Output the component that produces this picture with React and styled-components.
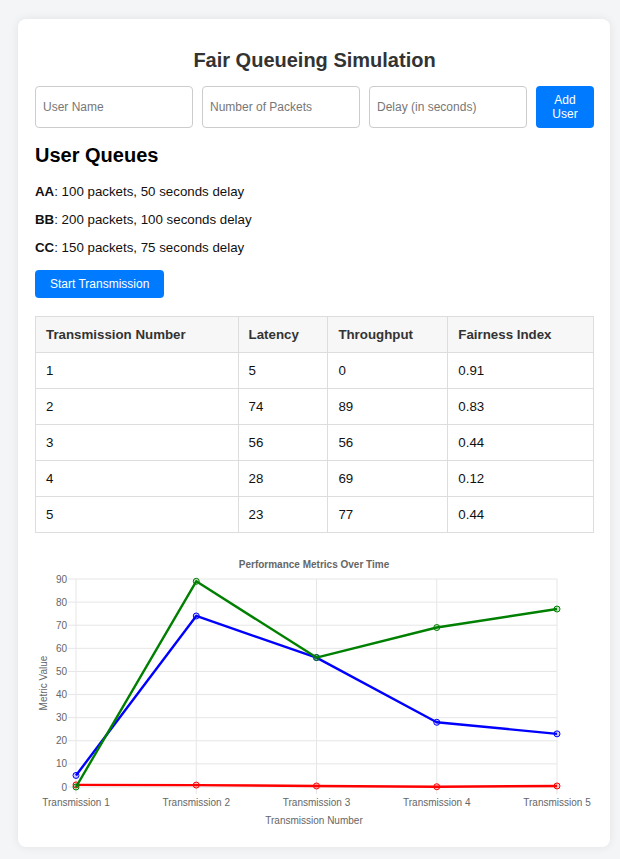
import React from 'react'
import styled, { createGlobalStyle } from 'styled-components';

const GlobalStyle = createGlobalStyle`
    body {
        margin: 0;
        background: #f4f5f7;
        font-family: "Liberation Sans", Arial, Helvetica, sans-serif;
    }
`;

const Page = styled.div`
    padding: 19px 10px 13px 18px;
`;

const Card = styled.div`
    background: #fff;
    border-radius: 8px;
    box-shadow: 0 0 10px rgba(0,0,0,0.08);
    padding: 17px 16px 14px 17px;
`;

const Title = styled.h1`
    margin: 12px 0 14px;
    font-size: 20px;
    line-height: 24px;
    text-align: center;
    color: #333;
`;

const Form = styled.div`
    display: flex;
    gap: 9px;
`;

const Input = styled.input`
    flex: 1;
    min-width: 0;
    height: 42px;
    box-sizing: border-box;
    padding: 0 7px;
    border: 1px solid #ccc;
    border-radius: 4px;
    font-family: inherit;
    font-size: 12px;
    &::placeholder { color: #777; }
`;

const Button = styled.button`
    background: #007bff;
    color: #fff;
    border: none;
    border-radius: 4px;
    font-family: inherit;
    font-size: 12px;
    line-height: 14px;
    padding: ${p => p.$padding || '7px 15px'};
    width: ${p => p.$width || 'auto'};
    margin: ${p => p.$margin || '0'};
`;

const Heading = styled.h2`
    margin: 15px 0 17px;
    font-size: 20px;
    line-height: 24px;
    color: #000;
`;

const QueueItem = styled.p`
    margin: 0 0 12px;
    font-size: 13.3px;
    line-height: 16px;
    color: #111;
`;

const Table = styled.table`
    width: 100%;
    margin-top: 18px;
    border-collapse: collapse;
    font-size: 13.3px;
`;

const Th = styled.th`
    width: ${p => p.$w};
    height: 36px;
    box-sizing: border-box;
    padding: 0 10px;
    border: 1px solid #ddd;
    background: #f7f7f7;
    color: #333;
    text-align: left;
`;

const Td = styled.td`
    height: 36px;
    box-sizing: border-box;
    padding: 0 10px;
    border: 1px solid #ddd;
    color: #111;
`;

const ChartWrap = styled.div`
    margin-top: 20px;
    svg { display: block; font-family: "Liberation Sans", Arial, sans-serif; }
`;

const users = [
    { name: 'AA', packets: 100, delay: 50 },
    { name: 'BB', packets: 200, delay: 100 },
    { name: 'CC', packets: 150, delay: 75 },
];

const rows = [
    [1, 5, 0, 0.91],
    [2, 74, 89, 0.83],
    [3, 56, 56, 0.44],
    [4, 28, 69, 0.12],
    [5, 23, 77, 0.44],
];

const cols = [
    ['Transmission Number', '36.3%'],
    ['Latency', '16.1%'],
    ['Throughput', '21.5%'],
    ['Fairness Index', '26.1%'],
];

const left = 41, right = 522, top = 26, bottom = 234;
const xAt = i => left + (right - left) * i / 4;
const yAt = v => bottom - (bottom - top) * v / 90;

const series = [
    { color: '#ff0000', fill: 'rgba(255,0,0,0.2)', idx: 3 },
    { color: '#0000ff', fill: 'rgba(0,0,255,0.2)', idx: 1 },
    { color: '#008000', fill: 'rgba(0,128,0,0.2)', idx: 2 },
];

const Chart = () => (
    <svg width="559" height="280" viewBox="0 0 559 280">
        <text x="279" y="15" textAnchor="middle" fontSize="10" fontWeight="bold" fill="#666">Performance Metrics Over Time</text>
        {Array.from({ length: 10 }, (_, k) => (
            <g key={'h' + k}>
                <line x1={left - 8} x2={right} y1={yAt(k * 10)} y2={yAt(k * 10)} stroke="#e6e6e6" />
                <text x={left - 9} y={yAt(k * 10) + 3.5} textAnchor="end" fontSize="10" fill="#666">{k * 10}</text>
            </g>
        ))}
        {rows.map((r, i) => (
            <g key={'v' + i}>
                <line x1={xAt(i)} x2={xAt(i)} y1={top} y2={bottom + 7} stroke="#e6e6e6" />
                <text x={xAt(i)} y={bottom + 19} textAnchor="middle" fontSize="10" fill="#666">Transmission {r[0]}</text>
            </g>
        ))}
        <text x="279" y="271" textAnchor="middle" fontSize="10" fill="#666">Transmission Number</text>
        <text transform="translate(12 130) rotate(-90)" textAnchor="middle" fontSize="10" fill="#666">Metric Value</text>
        {series.map(s => (
            <g key={s.idx}>
                <polyline
                    points={rows.map((r, i) => `${xAt(i)},${yAt(r[s.idx])}`).join(' ')}
                    fill="none" stroke={s.color} strokeWidth="2.4" strokeLinejoin="round"
                />
                {rows.map((r, i) => (
                    <circle key={i} cx={xAt(i)} cy={yAt(r[s.idx])} r="3" fill={s.fill} stroke={s.color} strokeWidth="1" />
                ))}
            </g>
        ))}
    </svg>
);

const App = () => {
    return (
        <>
            <GlobalStyle />
            <Page>
                <Card>
                    <Title>Fair Queueing Simulation</Title>
                    <Form>
                        <Input placeholder="User Name" />
                        <Input placeholder="Number of Packets" />
                        <Input placeholder="Delay (in seconds)" />
                        <Button $padding="0 10px" $width="58px">Add User</Button>
                    </Form>
                    <Heading>User Queues</Heading>
                    {users.map(u => (
                        <QueueItem key={u.name}>
                            <strong>{u.name}</strong>: {u.packets} packets, {u.delay} seconds delay
                        </QueueItem>
                    ))}
                    <Button $margin="2px 0 0">Start Transmission</Button>
                    <Table>
                        <thead>
                            <tr>
                                {cols.map(([c, w]) => <Th key={c} $w={w}>{c}</Th>)}
                            </tr>
                        </thead>
                        <tbody>
                            {rows.map(r => (
                                <tr key={r[0]}>
                                    {r.map((v, i) => <Td key={i}>{v}</Td>)}
                                </tr>
                            ))}
                        </tbody>
                    </Table>
                    <ChartWrap>
                        <Chart />
                    </ChartWrap>
                </Card>
            </Page>
        </>
    )
};

export default App
